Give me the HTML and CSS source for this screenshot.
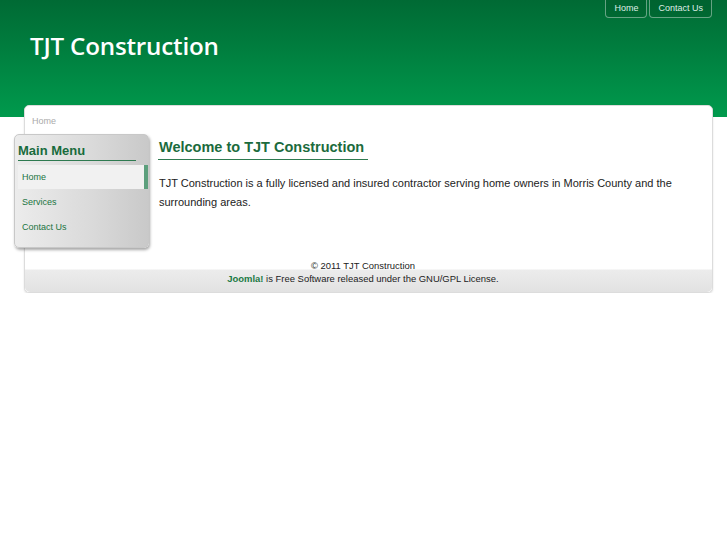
FILE: index.html
```html
<!DOCTYPE html>
<html>
<head>
<meta charset="utf-8">
<link rel="stylesheet" href="styles.css">
</head>
<body>
<div class="header">
  <ul class="topnav">
    <li><a href="#">Home</a></li>
    <li><a href="#">Contact Us</a></li>
  </ul>
  <h1 class="logo">TJT Construction</h1>
</div>
<div class="container">
  <div class="breadcrumb">Home</div>
  <div class="main">
    <div class="sidebar">
      <h3 class="menu-title">Main Menu</h3>
      <ul class="menu">
        <li class="active"><a href="#">Home</a></li>
        <li><a href="#">Services</a></li>
        <li><a href="#">Contact Us</a></li>
      </ul>
    </div>
    <div class="content">
      <h2 class="page-title">Welcome to TJT Construction</h2>
      <p class="text">TJT Construction is a fully licensed and insured contractor serving home owners in Morris County and the surrounding areas.</p>
    </div>
  </div>
  <div class="footer">
    <p class="copy">© 2011 TJT Construction</p>
    <p class="powered"><a href="#">Joomla!</a> is Free Software released under the GNU/GPL License.</p>
  </div>
</div>
</body>
</html>
```
FILE: styles.css
```css
html, body {
  margin: 0;
  padding: 0;
  background: #fff;
  font-family: "Liberation Sans", Arial, sans-serif;
}
.header {
  height: 117px;
  background: linear-gradient(#006a34, #009a4d);
  position: relative;
  box-sizing: border-box;
  padding-top: 0;
}
.topnav {
  list-style: none;
  margin: 0;
  padding: 0 15px 0 0;
  display: flex;
  justify-content: flex-end;
  gap: 2px;
}
.topnav a {
  display: block;
  height: 18px;
  line-height: 17px;
  padding: 0 8px;
  box-sizing: border-box;
  border: 1px solid rgba(255,255,255,0.4);
  border-top: none;
  border-radius: 0 0 4px 4px;
  color: #dfeee5;
  font-size: 9px;
  text-decoration: none;
  background: rgba(0,60,30,0.15);
}
.logo {
  margin: 13px 0 0 30px;
  font-family: "Open Sans", sans-serif;
  font-weight: 600;
  font-size: 24.2px;
  color: #fff;
  line-height: 30px;
  letter-spacing: -0.2px;
}
.container {
  margin: -12px 14px 0 24px;
  background: #fff;
  border: 1px solid #dcdcdc;
  border-radius: 5px;
  position: relative;
  box-shadow: 0 1px 2px rgba(0,0,0,0.12);
}
.breadcrumb {
  font-size: 9px;
  color: #aaa;
  padding: 10px 0 0 7px;
  height: 18px;
}
.main {
  display: flex;
  min-height: 125px;
}
.sidebar {
  width: 135px;
  height: 114px;
  margin-left: -11px;
  box-sizing: border-box;
  border: 1px solid #c8c8c8;
  border-radius: 5px;
  background: linear-gradient(to right, #ececec, #d9d9d9 60%, #c9c9c9);
  box-shadow: 1px 2px 3px rgba(0,0,0,0.35);
  padding: 8px 0 0 3px;
}
.menu-title {
  margin: 0 12px 0 0;
  padding: 0 0 2px 0;
  font-size: 13px;
  color: #186b3c;
  border-bottom: 1px solid #2e7a50;
  line-height: 15px;
}
.menu {
  list-style: none;
  margin: 4px 0 0 0;
  padding: 0;
}
.menu li a {
  display: block;
  height: 25px;
  line-height: 26px;
  padding-left: 4px;
  font-size: 9px;
  color: #1a7441;
  text-decoration: none;
}
.menu li.active a {
  background: #f1f1f1;
  border-right: 4px solid #5c9f7c;
  height: 24px;
  line-height: 25px;
}
.content {
  flex: 1;
  padding-left: 9px;
  padding-top: 4px;
}
.page-title {
  display: inline-block;
  margin: 0;
  padding: 0 4px 3px 1px;
  font-size: 14.5px;
  color: #1b6b3d;
  border-bottom: 1px solid #2e7a50;
  line-height: 18px;
}
.text {
  margin: 14px 0 0 1px;
  font-size: 11px;
  line-height: 19px;
  color: #222;
}
.footer {
  text-align: center;
  font-size: 9.45px;
  color: #222;
  background: linear-gradient(#fff 0, #fff 10px, #ececec 11px, #e2e2e2);
  border-radius: 0 0 5px 5px;
  height: 33px;
  box-sizing: border-box;
  padding: 0 11px 0 0;
}
.footer p {
  margin: 0;
  line-height: 13px;
}
.powered a {
  color: #1b7a44;
  font-weight: bold;
  text-decoration: none;
}
```
